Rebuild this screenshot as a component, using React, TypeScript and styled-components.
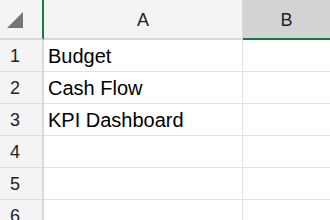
import React from "react";
import styled, { createGlobalStyle } from "styled-components";

const Global = createGlobalStyle`
  html, body { margin: 0; padding: 0; background: #ffffff; overflow: hidden; }
  body { font-family: "Liberation Sans", Arial, sans-serif; }
`;

const Sheet = styled.div`
  display: grid;
  grid-template-columns: 44px 199px 1fr;
  grid-auto-rows: 32px;
  grid-template-rows: 40px;
  width: 330px;
  height: 220px;
  overflow: hidden;
  color: #1a1a1a;
`;

const Corner = styled.div`
  position: relative;
  background: #f4f4f4;
  border-right: 2px solid #107c41;
  border-bottom: 2px solid #d9d9d9;
`;

const Triangle = styled.div`
  position: absolute;
  left: 7px;
  top: 12px;
  width: 0;
  height: 0;
  border-style: solid;
  border-width: 0 0 16px 16px;
  border-color: transparent transparent #767676 transparent;
`;

const ColHeader = styled.div<{ $selected?: boolean; $last?: boolean }>`
  display: flex;
  align-items: center;
  justify-content: center;
  background: ${(p) => (p.$selected ? "#d3d3d3" : "#f4f4f4")};
  border-bottom: 2px solid ${(p) => (p.$selected ? "#107c41" : "#d9d9d9")};
  border-right: ${(p) => (p.$last ? "none" : "1px solid #d9d9d9")};
  font-size: 18px;
  color: #222;
  padding-top: 2px;
`;

const RowHeader = styled.div`
  display: flex;
  align-items: center;
  justify-content: center;
  padding-right: 12px;
  padding-top: 2px;
  background: #f4f4f4;
  border-right: 2px solid #dadada;
  border-bottom: 1px solid #dcdcdc;
  font-size: 18px;
  color: #222;
`;

const Cell = styled.div<{ $last?: boolean }>`
  display: flex;
  align-items: center;
  padding-left: 4px;
  padding-top: 2px;
  border-right: ${(p) => (p.$last ? "none" : "1px solid #e1e1e1")};
  border-bottom: 1px solid #e1e1e1;
  font-size: 20px;
  color: #000;
  white-space: nowrap;
  overflow: hidden;
`;

const rows = ["Budget", "Cash Flow", "KPI Dashboard", "", "", ""];

export default function App() {
  return (
    <>
      <Global />
      <Sheet>
        <Corner>
          <Triangle />
        </Corner>
        <ColHeader>A</ColHeader>
        <ColHeader $selected $last>
          B
        </ColHeader>
        {rows.map((text, i) => (
          <React.Fragment key={i}>
            <RowHeader>{i + 1}</RowHeader>
            <Cell>{text}</Cell>
            <Cell $last />
          </React.Fragment>
        ))}
      </Sheet>
    </>
  );
}
